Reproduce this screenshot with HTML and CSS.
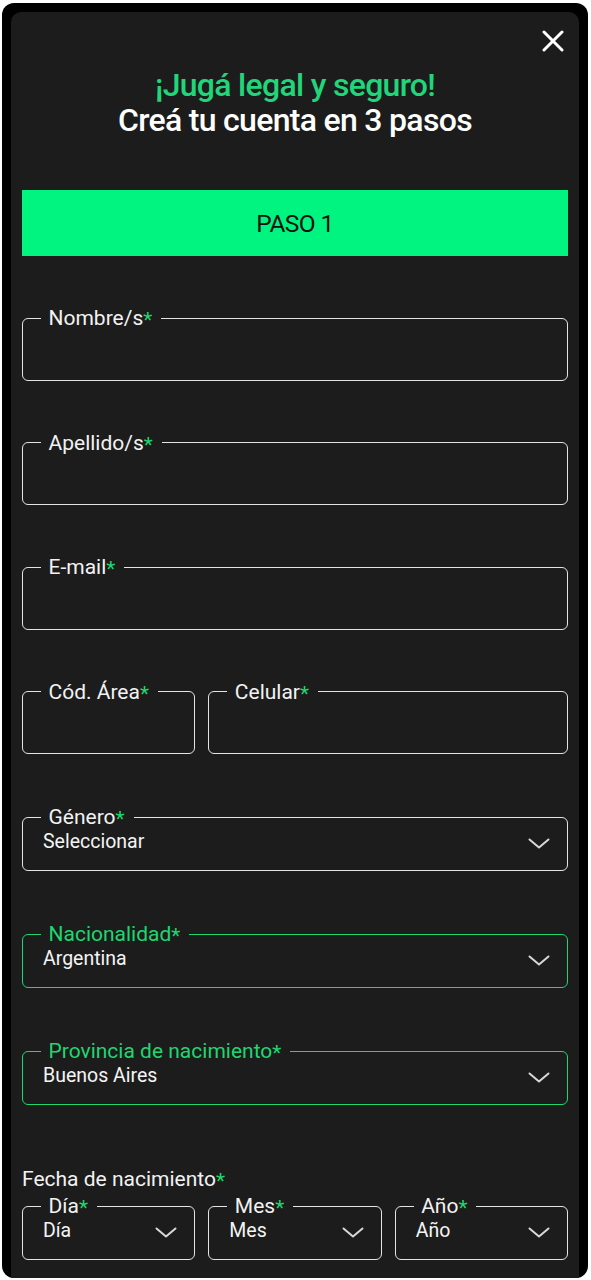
FILE: index.html
```html
<!DOCTYPE html>
<html lang="es">
<head>
<meta charset="utf-8">
<title>Registro</title>
<link rel="stylesheet" href="styles.css">
</head>
<body>
<div class="frame">
  <div class="panel">
    <div class="top">
      <button class="close" aria-label="Cerrar">
        <svg width="22" height="22" viewBox="0 0 22 22"><path d="M2 2 L20 20 M20 2 L2 20" stroke="#fff" stroke-width="3" stroke-linecap="round"/></svg>
      </button>
    </div>
    <h1 class="title"><span class="green">¡Jugá legal y seguro!</span><span class="white">Creá tu cuenta en 3 pasos</span></h1>
    <div class="step">PASO 1</div>
    <form class="form">
      <fieldset class="field">
        <legend>Nombre/s<span class="req">*</span></legend>
        <div class="input"></div>
      </fieldset>
      <fieldset class="field">
        <legend>Apellido/s<span class="req">*</span></legend>
        <div class="input"></div>
      </fieldset>
      <fieldset class="field">
        <legend>E-mail<span class="req">*</span></legend>
        <div class="input"></div>
      </fieldset>
      <div class="grid3">
        <fieldset class="field">
          <legend>Cód. Área<span class="req">*</span></legend>
          <div class="input"></div>
        </fieldset>
        <fieldset class="field span2">
          <legend>Celular<span class="req">*</span></legend>
          <div class="input"></div>
        </fieldset>
      </div>
      <fieldset class="field select">
        <legend>Género<span class="req">*</span></legend>
        <div class="value"><span>Seleccionar</span><svg class="chev" width="22" height="11" viewBox="0 0 22 11"><path d="M1.5 1.5 L11 9.5 L20.5 1.5" fill="none" stroke="#d8d8d8" stroke-width="2" stroke-linecap="round" stroke-linejoin="round"/></svg></div>
      </fieldset>
      <fieldset class="field select active">
        <legend>Nacionalidad<span class="req">*</span></legend>
        <div class="value"><span>Argentina</span><svg class="chev" width="22" height="11" viewBox="0 0 22 11"><path d="M1.5 1.5 L11 9.5 L20.5 1.5" fill="none" stroke="#d8d8d8" stroke-width="2" stroke-linecap="round" stroke-linejoin="round"/></svg></div>
      </fieldset>
      <fieldset class="field select active">
        <legend>Provincia de nacimiento<span class="req">*</span></legend>
        <div class="value"><span>Buenos Aires</span><svg class="chev" width="22" height="11" viewBox="0 0 22 11"><path d="M1.5 1.5 L11 9.5 L20.5 1.5" fill="none" stroke="#d8d8d8" stroke-width="2" stroke-linecap="round" stroke-linejoin="round"/></svg></div>
      </fieldset>
      <div class="date">
        <div class="date-label">Fecha de nacimiento<span class="req">*</span></div>
        <div class="grid3">
          <fieldset class="field select">
            <legend>Día<span class="req">*</span></legend>
            <div class="value"><span>Día</span><svg class="chev" width="22" height="11" viewBox="0 0 22 11"><path d="M1.5 1.5 L11 9.5 L20.5 1.5" fill="none" stroke="#d8d8d8" stroke-width="2" stroke-linecap="round" stroke-linejoin="round"/></svg></div>
          </fieldset>
          <fieldset class="field select">
            <legend>Mes<span class="req">*</span></legend>
            <div class="value"><span>Mes</span><svg class="chev" width="22" height="11" viewBox="0 0 22 11"><path d="M1.5 1.5 L11 9.5 L20.5 1.5" fill="none" stroke="#d8d8d8" stroke-width="2" stroke-linecap="round" stroke-linejoin="round"/></svg></div>
          </fieldset>
          <fieldset class="field select">
            <legend>Año<span class="req">*</span></legend>
            <div class="value"><span>Año</span><svg class="chev" width="22" height="11" viewBox="0 0 22 11"><path d="M1.5 1.5 L11 9.5 L20.5 1.5" fill="none" stroke="#d8d8d8" stroke-width="2" stroke-linecap="round" stroke-linejoin="round"/></svg></div>
          </fieldset>
        </div>
      </div>
    </form>
  </div>
</div>
</body>
</html>
```
FILE: styles.css
```css
* { box-sizing: border-box; }
html, body { margin: 0; padding: 0; background: #ffffff; }
body { font-family: Roboto, "Liberation Sans", sans-serif; height: 1280px; overflow: hidden; }

.frame {
  margin: 3px 3px 0 2px;
  width: 586px;
  height: 1275px;
  background: #000;
  border-radius: 12px;
  padding: 9px 9px 0 9px;
  overflow: hidden;
}
.panel {
  background: #1c1c1c;
  border-radius: 10px 10px 0 0;
  height: 100%;
  padding: 18px 11px 0 11px;
  color: #f2f2f2;
}
.top { display: flex; justify-content: flex-end; padding-right: 4px; height: 22px; }
.close { background: none; border: 0; padding: 0; width: 22px; height: 22px; display: flex; cursor: pointer; }

.title {
  margin: 16px 0 0 0;
  display: flex;
  flex-direction: column;
  align-items: center;
  font-weight: 500;
  font-size: 32px;
  line-height: 35px;
  letter-spacing: -0.7px;
}
.title .green { color: #22d47a; }
.title .white { color: #ffffff; }

.step {
  margin-top: 52px;
  height: 66px;
  background: #00f47f;
  color: #111;
  display: flex;
  align-items: center;
  justify-content: center;
  font-size: 24.5px;
  letter-spacing: -0.6px;
}

.form { margin-top: 50px; display: flex; flex-direction: column; gap: 50px; }

.field {
  margin: 0;
  min-width: 0;
  padding: 0 20px;
  border: 1.5px solid #e4e4e4;
  border-radius: 6px;
}
.field legend {
  margin-left: -2px;
  padding: 0 9px 0 7.5px;
  font-size: 21px;
  line-height: 24px;
  color: #f2f2f2;
}
.req { color: #1fd66f; vertical-align: -0.1em; line-height: 0; }
.input { height: 49.5px; }

.select { margin-top: 1px; }
.select .value {
  height: 41px;
  padding-top: 3px;
  display: flex;
  justify-content: space-between;
  align-items: flex-start;
  font-size: 19.5px;
  line-height: 20px;
  color: #f4f4f4;
}
.select .chev { margin-top: 6px; margin-right: -3px; flex: none; }
.active { border-color: #1fd66f; }
.active legend { color: #1fd66f; }

.grid3 { display: grid; grid-template-columns: 1fr 1fr 1fr; gap: 13px; }
.span2 { grid-column: span 2; }

.date { display: flex; flex-direction: column; margin-top: 12px; }
.date-label { font-size: 21px; line-height: 24px; margin-bottom: 3px; }
.date .select { margin-top: 0; }
```
